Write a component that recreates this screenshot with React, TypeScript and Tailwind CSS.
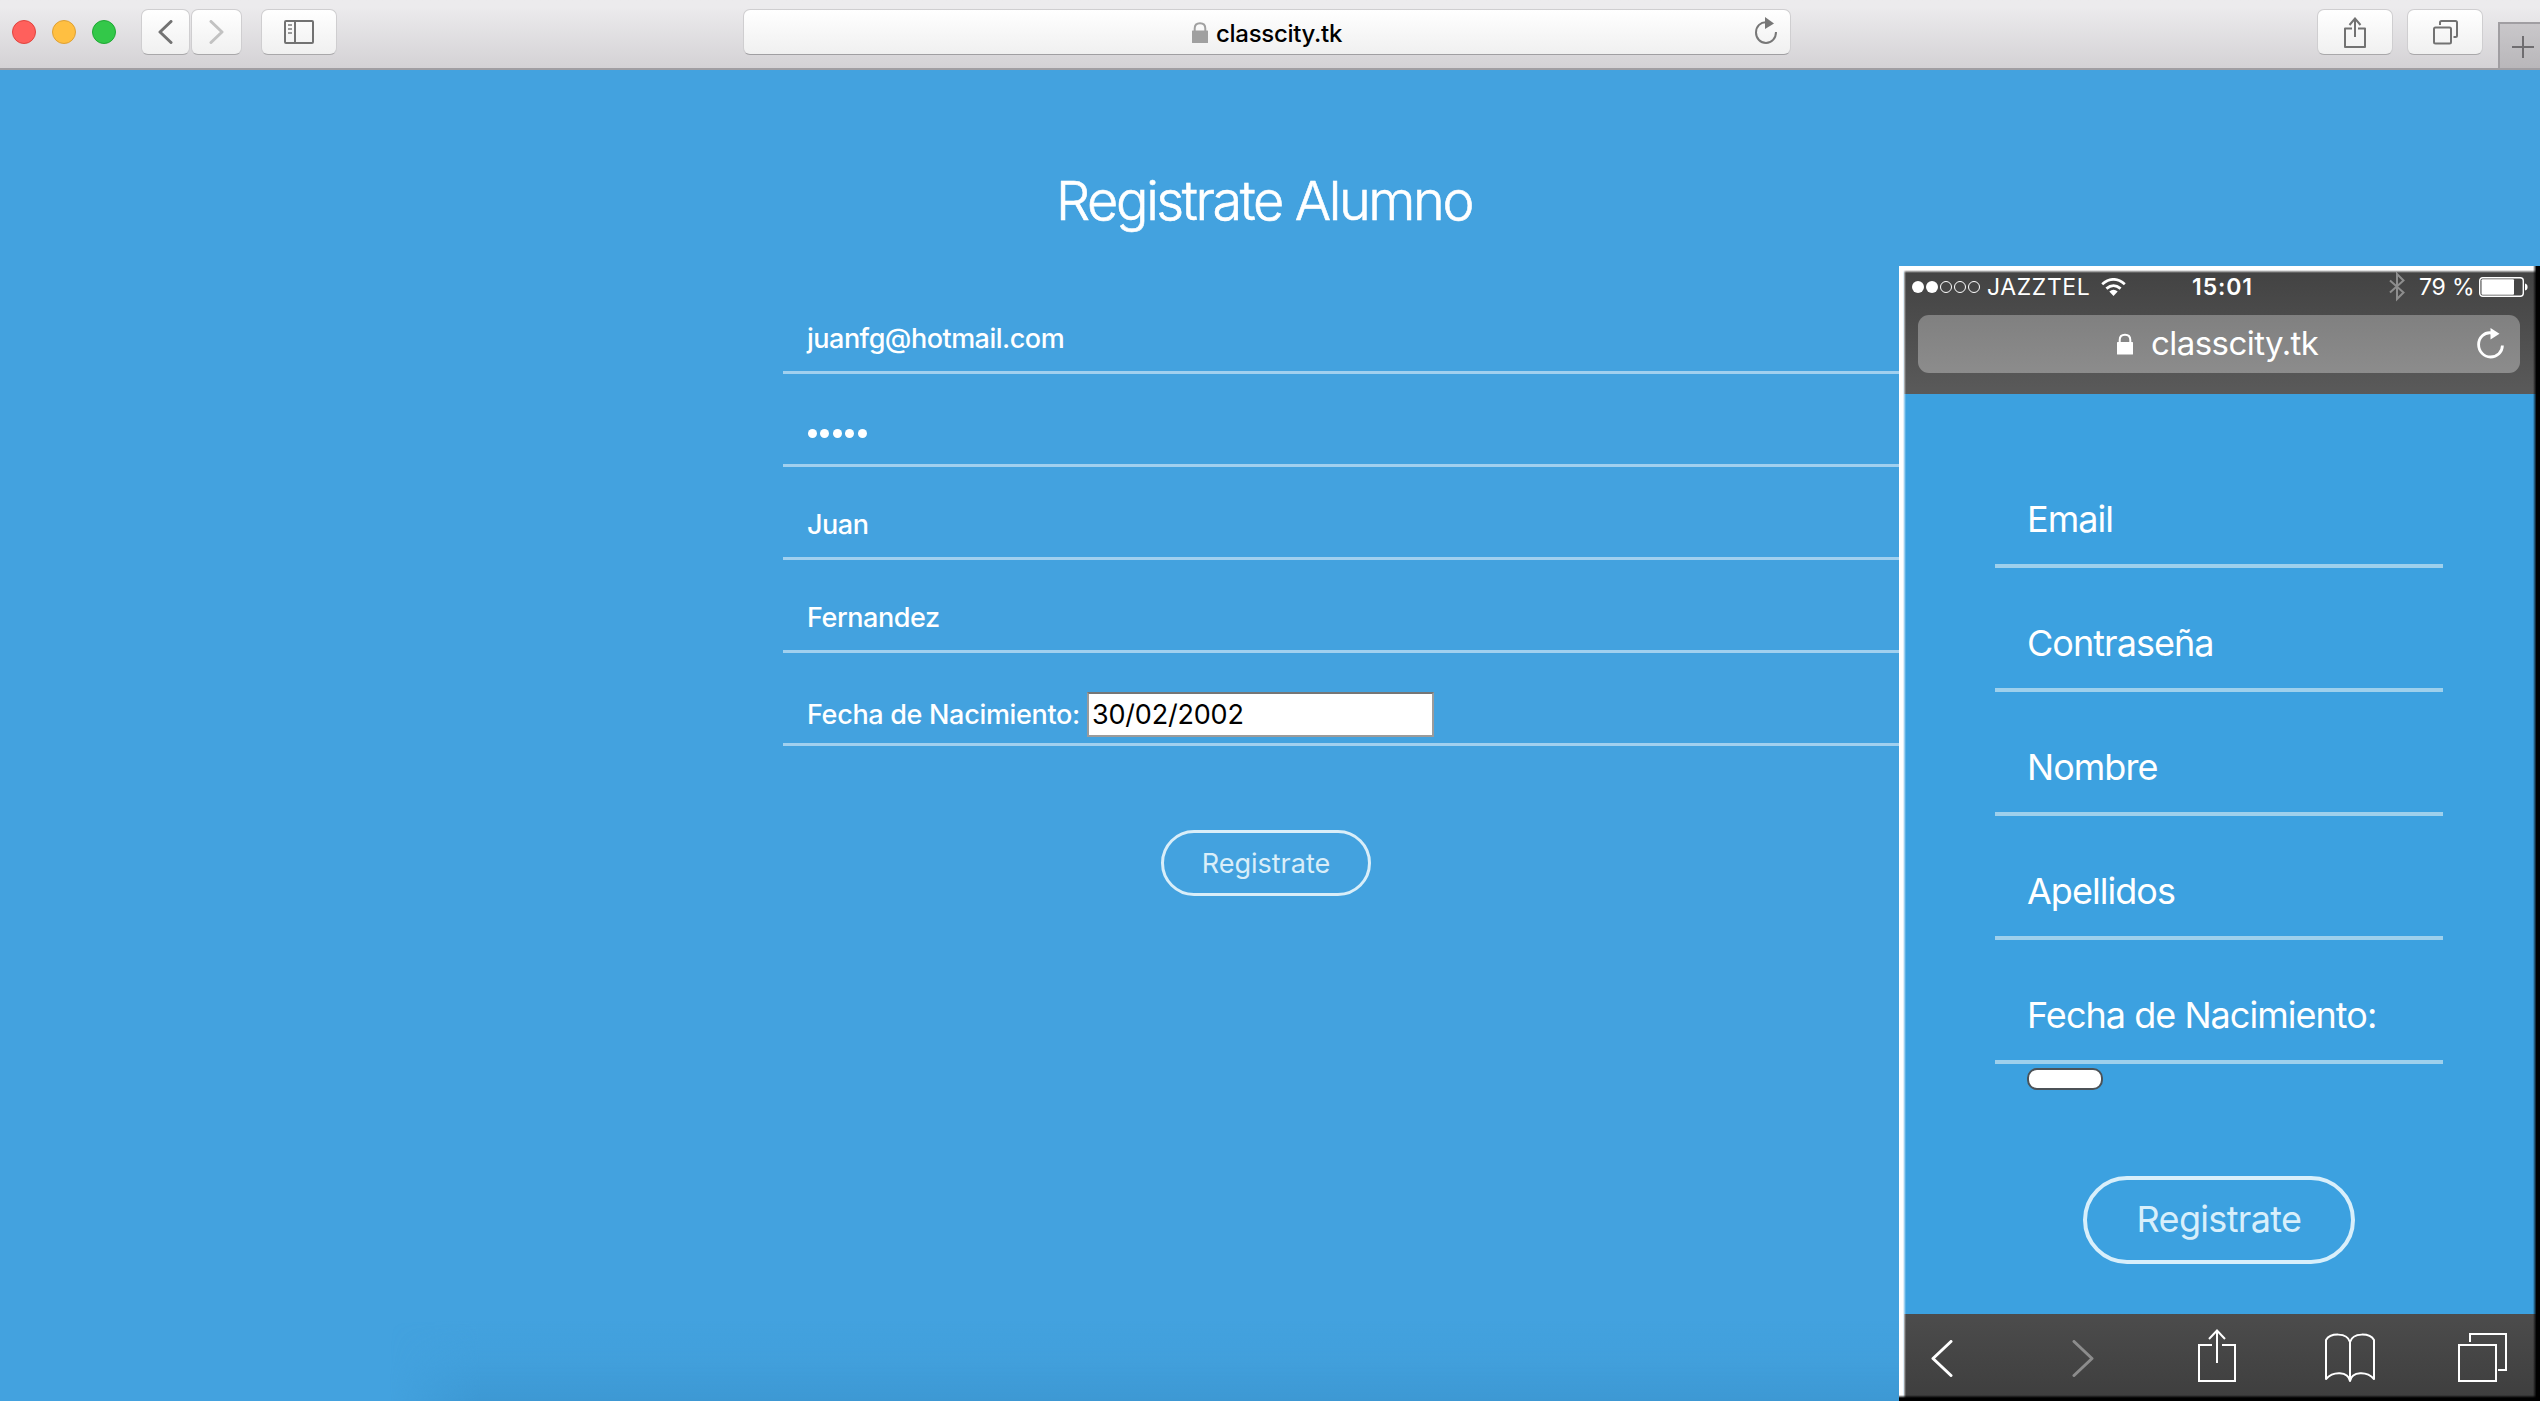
import React from "react";

/* Icons of the desktop toolbar */
const Chevron = ({ className, flip, w, h, sw }: { className?: string; flip?: boolean; w: number; h: number; sw: number }) => (
  <svg className={className} width={w} height={h} viewBox={`0 0 ${w} ${h}`} fill="none" stroke="currentColor" strokeWidth={sw} strokeLinecap="round" strokeLinejoin="round">
    <path d={flip ? `M${sw / 2 + 0.5} ${sw / 2}L${w - sw / 2 - 0.5} ${h / 2}L${sw / 2 + 0.5} ${h - sw / 2}` : `M${w - sw / 2 - 0.5} ${sw / 2}L${sw / 2 + 0.5} ${h / 2}L${w - sw / 2 - 0.5} ${h - sw / 2}`} />
  </svg>
);

const SidebarIcon = () => (
  <svg width="30" height="24" viewBox="0 0 30 24" fill="none" stroke="#727272" strokeWidth="2">
    <rect x="1" y="1" width="28" height="22" rx="1" />
    <path d="M11 1V23" />
    <path d="M4 5H8M4 9H8M4 13H8" stroke="#9a9a9a" />
  </svg>
);

const ReloadIcon = () => (
  <svg width="24" height="28" viewBox="0 0 24 28" fill="none">
    <path d="M13 5.2C6.5 4.5 2 9.5 2 15.5C2 21.5 6.5 26 12 26C17.5 26 22 21.5 22 15" stroke="#777" strokeWidth="2" />
    <path d="M11 0L20 6.5L11 12Z" fill="#777" />
  </svg>
);

const ShareIcon = () => (
  <svg width="22" height="31" viewBox="0 0 22 31" fill="none" stroke="#727272" strokeWidth="2">
    <path d="M8 11.5H1V30H21V11.5H14" strokeLinejoin="round" />
    <path d="M11 20V2" />
    <path d="M5.5 8L11 1.5L16.5 8" />
  </svg>
);

const TabsIcon = () => (
  <svg width="25" height="25" viewBox="0 0 25 25" fill="none" stroke="#727272" strokeWidth="2">
    <rect x="1" y="7.5" width="17" height="16" rx="1.5" />
    <path d="M7 5V2.5Q7 1 8.5 1H22.5Q24 1 24 2.5V15.5Q24 17 22.5 17H20.5" />
  </svg>
);

const Lock = ({ className }: { className: string }) => (
  <svg className={className} viewBox="0 0 16 21" fill="none">
    <rect x="0" y="8.5" width="16" height="12.5" rx="0.6" fill="currentColor" />
    <path d="M2.7 9V6.5C2.7 3 5 1.2 8 1.2S13.3 3 13.3 6.5V9" stroke="currentColor" strokeWidth="2" />
  </svg>
);

const ToolButton = ({ className, children }: { className: string; children: React.ReactNode }) => (
  <button className={`flex h-[46px] items-center justify-center rounded-[7px] border border-b-[#a9a8aa] border-[#cfced0] bg-gradient-to-b from-white to-[#f0f0f0] ${className}`}>{children}</button>
);

const BrowserToolbar = () => (
  <header className="flex h-[70px] shrink-0 items-start border-b-2 border-[#a09ea2] bg-gradient-to-b from-[#ecebed] from-10% to-[#d4d2d5] pl-3">
    <div className="mt-5 flex gap-4">
      <span className="size-6 rounded-full border border-[#e0443e] bg-[#ff605c]" />
      <span className="size-6 rounded-full border border-[#dea035] bg-[#ffbf41]" />
      <span className="size-6 rounded-full border border-[#1fa834] bg-[#33c849]" />
    </div>
    <div className="ml-[25px] mt-[9px] flex gap-[1px]">
      <ToolButton className="w-[49px]"><Chevron className="text-[#727272]" w={15} h={24} sw={3} /></ToolButton>
      <ToolButton className="w-[51px]"><Chevron flip className="text-[#c2c2c2]" w={15} h={24} sw={3} /></ToolButton>
    </div>
    <ToolButton className="ml-[19px] mt-[9px] w-[76px]"><SidebarIcon /></ToolButton>
    <div className="ml-[406px] mt-[9px] flex h-[46px] w-[1048px] items-center rounded-[7px] border border-[#cfced0] border-b-[#a09fa2] bg-gradient-to-b from-white to-[#f0f0f0] pl-[448px]">
      <Lock className="h-[21px] w-4 text-[#a0a0a0]" />
      <span className="ml-2 mt-[3px] whitespace-nowrap font-[Inter] text-[24px] font-medium leading-[30px] tracking-[-0.3px] text-black">classcity.tk</span>
      <span className="ml-auto mr-3 -mt-[2px]"><ReloadIcon /></span>
    </div>
    <ToolButton className="ml-[526px] mt-[9px] w-[76px]"><ShareIcon /></ToolButton>
    <ToolButton className="ml-[14px] mt-[9px] w-[76px]"><TabsIcon /></ToolButton>
    <div className="ml-auto mt-[22px] flex h-[46px] w-[42px] items-center justify-center border-l-2 border-t-2 border-[#a09ea2] bg-gradient-to-b from-[#c9c7ca] to-[#b9b7ba] pl-[6px] pt-[2px]">
      <svg width="22" height="22" viewBox="0 0 22 22" stroke="#6f6d70" strokeWidth="2"><path d="M11 0V22M0 11H22" /></svg>
    </div>
  </header>
);

const Field = ({ children }: { children: React.ReactNode }) => (
  <div className="flex h-[93px] items-end whitespace-nowrap border-b-[3px] border-[#a1d0ef] pl-6">{children}</div>
);

const DesktopForm = () => (
  <main className="flex flex-col text-white">
    <h1 className="mt-[98px] w-[2528px] text-center text-[54px] font-light leading-[66px] tracking-[-2.4px] [-webkit-text-stroke:0.6px_white]"><span>Registrate Alumno</span></h1>
    <form className="ml-[783px] mt-[47px] w-[1200px] text-[27px] font-medium leading-8 tracking-[-0.45px]">
      <Field><span className="mb-[16px] tracking-[-0.5px]">juanfg@hotmail.com</span></Field>
      <Field>
        <span className="mb-[26px] flex gap-[3.4px] pl-[1px]">
          {[0, 1, 2, 3, 4].map((i) => <i key={i} className="size-[9px] rounded-full bg-white" />)}
        </span>
      </Field>
      <Field><span className="mb-[16px]">Juan</span></Field>
      <Field><span className="mb-[16px]">Fernandez</span></Field>
      <Field>
        <span className="mb-[12px] w-[272px] tracking-[-0.32px]">Fecha de Nacimiento:</span>
        <span className="mb-[6px] ml-[8px] flex h-[45px] w-[347px] items-center border-2 border-[#9b9b9b] border-t-[#767676] bg-white pl-[3px] pt-[1px] font-normal tracking-[-0.2px] text-black"><span>30/02/2002</span></span>
      </Field>
      <button type="button" className="ml-[378px] mt-[84px] flex h-[66px] w-[210px] items-center justify-center rounded-full border-[3px] border-[#d9eef9] pt-[1px] font-normal tracking-[0px] text-[#d9eef9]"><span>Registrate</span></button>
    </form>
  </main>
);

/* Phone window shown over the desktop page */
const PhoneStatusBar = () => (
  <div className="flex h-8 items-center whitespace-nowrap pl-[8px] text-[23px] leading-8">
    <div className="flex gap-[2px]">
      {[true, true, false, false, false].map((on, i) => (
        <i key={i} className={on ? "size-3 rounded-full bg-white" : "size-3 rounded-full border border-white"} />
      ))}
    </div>
    <span className="ml-[7px] w-[103px] tracking-[0.6px]">JAZZTEL</span>
    <svg className="ml-[11px]" width="25" height="18" viewBox="0 0 25 18" fill="none" stroke="white" strokeWidth="2.8">
      <path d="M1.2 6.2Q12.5 -3.4 23.8 6.2" />
      <path d="M5.4 10.6Q12.5 4.6 19.6 10.6" />
      <path d="M12.5 18L8.3 13.6Q12.5 10 16.7 13.6Z" fill="white" stroke="none" />
    </svg>
    <span className="ml-[66px] w-[61px] font-semibold tracking-[0.9px]">15:01</span>
    <svg className="ml-[136px]" width="16" height="30" viewBox="0 0 16 30" fill="none" stroke="#8e8e8e" strokeWidth="2"><path d="M1 8.5L14.5 20.5L8 27V2L14.5 8.5L1 20.5" /></svg>
    <span className="ml-[14px] w-[54px] tracking-[-0.2px]">79 %</span>
    <svg className="ml-[6px]" width="49" height="20" viewBox="0 0 49 20" fill="none">
      <rect x="0.7" y="0.7" width="43.6" height="18.6" rx="3" stroke="white" strokeWidth="1.4" />
      <rect x="2.5" y="2.3" width="32.5" height="15.4" rx="1" fill="white" />
      <path d="M46 6.5Q48.6 7 48.6 10T46 13.5Z" fill="white" />
    </svg>
  </div>
);

const PhoneField = ({ children }: { children: React.ReactNode }) => (
  <div className="flex h-[124px] items-end whitespace-nowrap border-b-4 border-[#9ed0ec] pl-8 pb-[25px]">{children}</div>
);

const Phone = () => (
  <section className="absolute left-[1899px] top-[266px] flex h-[1135px] w-[641px] flex-col overflow-hidden bg-[#3ca1e0] pl-[5px] text-white">
    <div className="h-[128px] shrink-0 bg-gradient-to-b from-[#424242] to-[#5a5a5a] pt-[5px]">
      <PhoneStatusBar />
      <div className="ml-[14px] mt-[12px] flex h-[58px] w-[602px] items-center rounded-[11px] bg-gradient-to-b from-[#808080] to-[#8c8c8c]">
        <Lock className="ml-[199px] h-[22px] w-4 text-white" />
        <span className="ml-[18px] -mt-[2px] whitespace-nowrap text-[33px] leading-[40px] tracking-[-0.55px]">classcity.tk</span>
        <svg className="-mt-[2px] ml-auto mr-[16px]" width="27" height="31" viewBox="0 0 27 31" fill="none">
          <path d="M15 5C7 3.5 1.6 10 1.6 16.5C1.6 23.5 7 29 13.5 29C20 29 25.4 24 25.4 17.5" stroke="white" strokeWidth="2.8" />
          <path d="M13.5 0L22.5 5.7L13.5 11.5Z" fill="white" />
        </svg>
      </div>
    </div>
    <div className="ml-[91px] mt-[50px] w-[448px] shrink-0 text-[36px] leading-[40px] tracking-[-0.97px]">
      <PhoneField><span>Email</span></PhoneField>
      <PhoneField><span>Contraseña</span></PhoneField>
      <PhoneField><span>Nombre</span></PhoneField>
      <PhoneField><span>Apellidos</span></PhoneField>
      <PhoneField><span>Fecha de Nacimiento:</span></PhoneField>
      <div className="ml-8 mt-1 h-[22px] w-[76px] rounded-[10px] border-2 border-[#4c5257] bg-white" />
      <button type="button" className="ml-[88px] mt-[86px] flex h-[88px] w-[272px] items-center justify-center rounded-full border-4 border-[#d8effb] pb-[2px] tracking-[-0.65px] text-[#d8effb]"><span>Registrate</span></button>
    </div>
    <nav className="mt-auto flex h-[87px] shrink-0 items-start bg-gradient-to-b from-[#4c4c4c] to-[#3e3e3e]">
      <Chevron className="ml-[27px] mt-[26px]" w={22} h={37} sw={3} />
      <Chevron flip className="ml-[119px] mt-[26px] text-[#8c8c8c]" w={22} h={37} sw={3} />
      <svg className="ml-[104px] mt-[15px]" width="38" height="53" viewBox="0 0 38 53" fill="none" stroke="white" strokeWidth="2">
        <path d="M14 16H1V52H37V16H24M19 34V2M11 10L19 1.5L27 10" />
      </svg>
      <svg className="ml-[89px] mt-[19px]" width="50" height="50" viewBox="0 0 50 50" fill="none" stroke="white" strokeWidth="2" strokeLinejoin="round">
        <path d="M25 9C22 -1 5 0 1 7V46C8 38 23 38 25 48C27 38 42 38 49 46V7C45 0 28 -1 25 9ZM25 9V48" />
      </svg>
      <svg className="ml-[83px] mt-[19px]" width="49" height="49" viewBox="0 0 49 49" fill="none" stroke="white" strokeWidth="2">
        <rect x="1" y="12" width="37" height="36" /><path d="M12 9V1H48V37H40" />
      </svg>
    </nav>
    {/* Bevelled window edge */}
    <div className="pointer-events-none absolute inset-0 border-l-[4px] border-t-[4px] border-white" />
    <div className="pointer-events-none absolute inset-y-0 left-[4px] w-[3px] bg-gradient-to-r from-white to-transparent" />
    <div className="pointer-events-none absolute inset-x-0 top-[4px] h-[3px] bg-gradient-to-b from-white to-transparent" />
    <div className="pointer-events-none absolute inset-y-0 right-0 w-[7px] bg-gradient-to-l from-black from-50% to-transparent" />
    <div className="pointer-events-none absolute inset-x-0 bottom-0 h-[6px] bg-gradient-to-t from-black from-50% to-transparent" />
  </section>
);

export default function App() {
  return (
    <div className="relative flex h-[1401px] w-[2540px] flex-col overflow-hidden bg-[#43a2df] font-[Inter]">
      <BrowserToolbar />
      <DesktopForm />
      <div className="mt-auto h-[80px] shrink-0 bg-gradient-to-b from-transparent via-[#3d98d3]/25 to-[#3d98d3] [mask-image:linear-gradient(to_right,transparent_390px,black_480px)]" />
      <Phone />
    </div>
  );
}
